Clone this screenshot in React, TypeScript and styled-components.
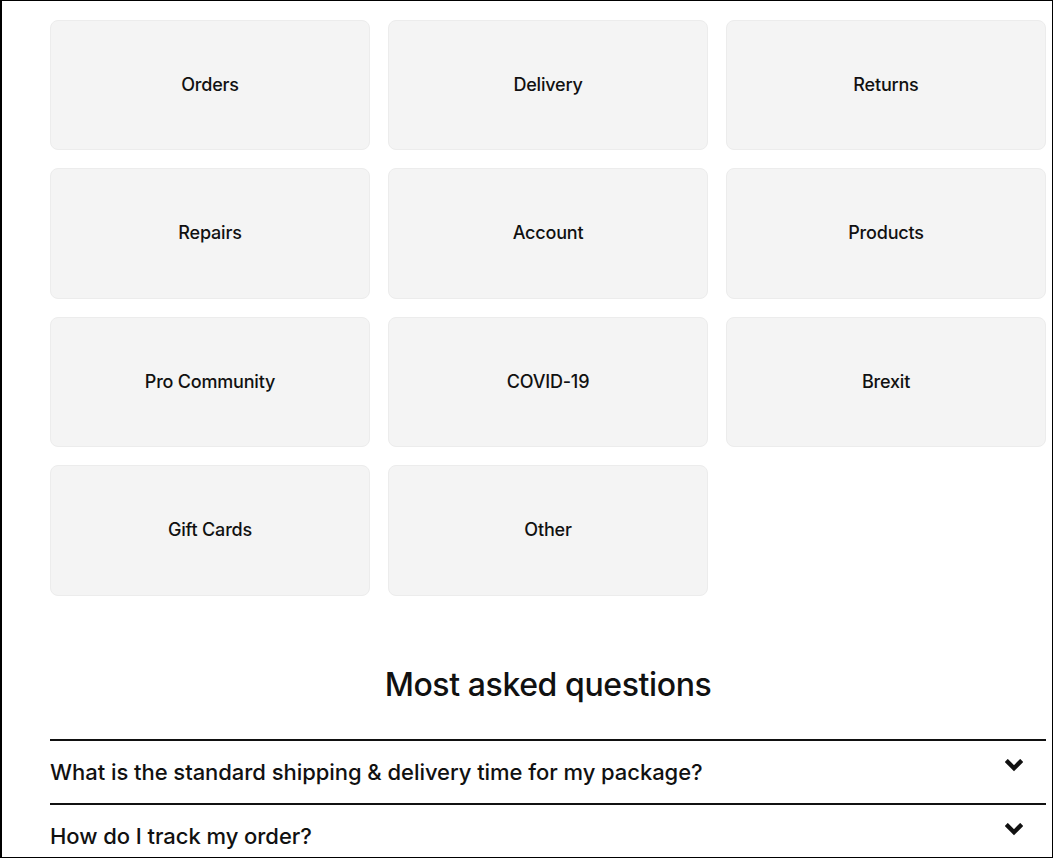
import styled, { createGlobalStyle } from 'styled-components'

const GlobalStyle = createGlobalStyle`
  html, body {
    margin: 0;
    padding: 0;
    background: #fff;
  }
  body {
    font-family: Inter, "Helvetica Neue", Arial, sans-serif;
    color: #111;
  }
`

const Frame = styled.div`
  box-sizing: border-box;
  width: 1053px;
  height: 858px;
  border: 1px solid #000;
  border-left-width: 2px;
  overflow: hidden;
  padding: 18.5px 6px 0 48px;
`

const TopicGrid = styled.div`
  display: grid;
  grid-template-columns: repeat(3, 320px);
  grid-auto-rows: 130.5px;
  column-gap: 18px;
  row-gap: 18px;
`

const TopicCard = styled.a`
  display: flex;
  align-items: center;
  justify-content: center;
  padding-bottom: 1px;
  background: #f4f4f4;
  border: 1px solid #ececec;
  border-radius: 8px;
  font-size: 18px;
  font-weight: 500;
  letter-spacing: -0.2px;
  color: #111;
  cursor: pointer;
`

const Heading = styled.h2`
  margin: 73px 0 0;
  width: 996px;
  text-align: center;
  font-size: 32px;
  font-weight: 500;
  letter-spacing: -0.4px;
  line-height: 1;
`

const FaqList = styled.div`
  width: 996px;
  margin-top: 38px;
`

const FaqRow = styled.div`
  display: flex;
  align-items: center;
  justify-content: space-between;
  height: 62px;
  border-top: 2px solid #111;
  font-size: 22px;
  font-weight: 500;
  letter-spacing: -0.05px;
  cursor: pointer;
`

const Chevron = styled.svg`
  width: 18px;
  height: 13px;
  margin-right: 23px;
  margin-top: -12px;
`

const topics = [
  'Orders',
  'Delivery',
  'Returns',
  'Repairs',
  'Account',
  'Products',
  'Pro Community',
  'COVID-19',
  'Brexit',
  'Gift Cards',
  'Other'
]

const questions = [
  'What is the standard shipping & delivery time for my package?',
  'How do I track my order?'
]

function ChevronDown (): JSX.Element {
  return (
    <Chevron viewBox='0 0 18 13'>
      <polyline points='2.8,3 9,9.2 15.2,3' fill='none' stroke='#111' strokeWidth='4.4' strokeLinecap='square' strokeLinejoin='miter' />
    </Chevron>
  )
}

function App (): JSX.Element {
  return (
    <>
      <GlobalStyle />
      <Frame>
        <TopicGrid>
          {topics.map((topic) => (
            <TopicCard key={topic}>{topic}</TopicCard>
          ))}
        </TopicGrid>
        <Heading>Most asked questions</Heading>
        <FaqList>
          {questions.map((q) => (
            <FaqRow key={q}>
              <span>{q}</span>
              <ChevronDown />
            </FaqRow>
          ))}
        </FaqList>
      </Frame>
    </>
  )
}

export default App
